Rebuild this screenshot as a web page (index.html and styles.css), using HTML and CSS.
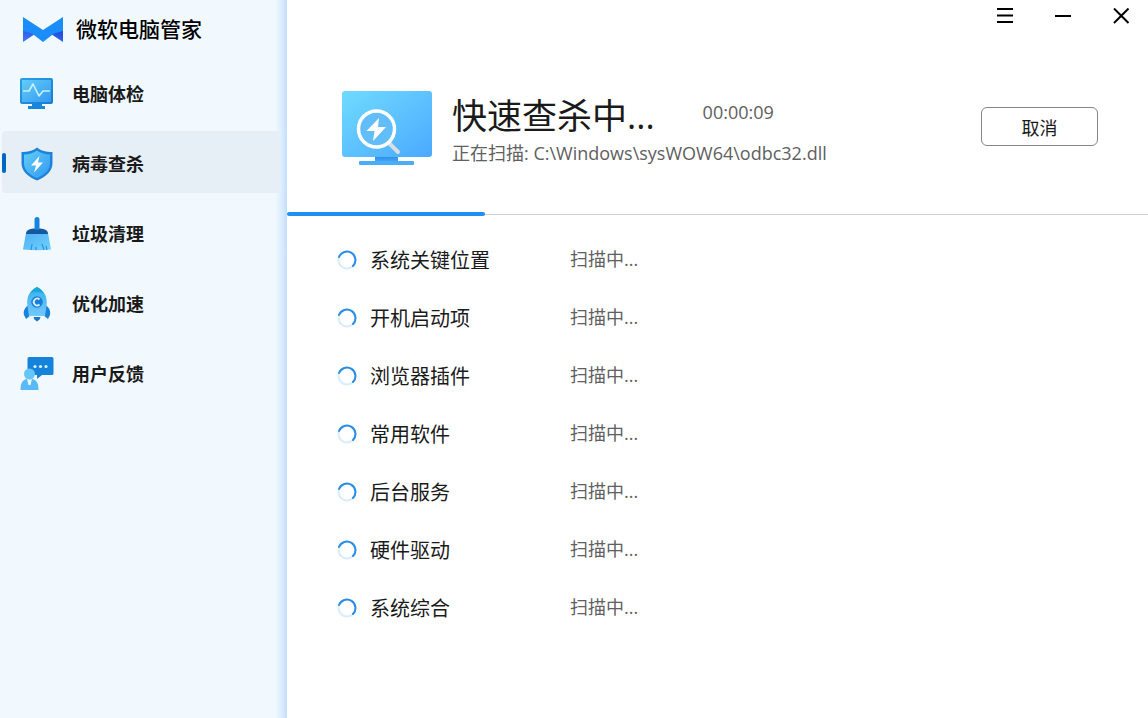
FILE: index.html
```html
<!DOCTYPE html>
<html lang="zh-CN">
<head>
<meta charset="utf-8">
<title>微软电脑管家</title>
<link rel="stylesheet" href="styles.css">
</head>
<body>
<svg class="symbols" aria-hidden="true">
  <symbol id="spinner" viewBox="0 0 20 20">
    <circle cx="10" cy="10" r="8.500" fill="none" stroke="#d9ecfd" stroke-width="2"/>
    <path d="M2 7a8.500 8.500 0 1 1 14 9" fill="none" stroke="#2a8ce6" stroke-width="2" stroke-linecap="round"/>
  </symbol>
</svg>
<div class="app">
  <aside class="sidebar">
    <div class="brand">
      <svg class="brand-logo" viewBox="0 0 40 26" aria-hidden="true">
        <defs><linearGradient id="fold" x1="0" y1="1" x2="1" y2="0"><stop offset="0" stop-color="#3f7bfa"/><stop offset="1" stop-color="#2347dc"/></linearGradient></defs>
        <path d="M0 14h12v3L0 25zM40 14H28v3l12 8z" fill="url(#fold)"/>
        <path d="M0 0l20 13L40 0v14l-9 2.500L20 25 9 16.500 0 14z" fill="#1b8dfb"/>
      </svg>
      <span class="brand-name">微软电脑管家</span>
    </div>
    <nav class="nav">
      <a class="nav-item" href="#checkup">
        <svg class="nav-icon" viewBox="0 0 36 36" aria-hidden="true">
          <defs>
            <linearGradient id="screen" x1="0" y1="0" x2="1" y2="1"><stop offset="0" stop-color="#63cdf8"/><stop offset="1" stop-color="#3299f1"/></linearGradient>
            <linearGradient id="frame" x1="0" y1="0" x2="1" y2="1"><stop offset="0" stop-color="#2ba1e5"/><stop offset="1" stop-color="#167bd6"/></linearGradient>
          </defs>
          <path d="M13 27h10v3h3v3H9v-3h4z" fill="#1688dc"/>
          <rect x="1" y="2" width="33" height="26" rx="2" fill="url(#frame)"/>
          <rect x="3" y="4" width="29" height="22" fill="url(#screen)"/>
          <path d="M4 15h6l4-7 6 12 4-5h7" fill="none" stroke="#c9f1ff" stroke-width="1.600" stroke-linejoin="round"/>
        </svg>
        <span>电脑体检</span>
      </a>
      <a class="nav-item active" href="#virus" aria-current="page">
        <svg class="nav-icon" viewBox="0 0 36 36" aria-hidden="true">
          <path d="M18 1.500c4.500 3.500 9 4.500 15.500 4.500v11c0 8-6 13.500-15.500 17.500C8.500 30.500 2.500 25 2.500 17V6C9 6 13.500 5 18 1.500z" fill="#1c84d8"/>
          <path d="M18 4.500c4 2.800 8 3.800 13 4v9c0 6.500-5 11-13 14.500C10 28.500 5 24 5 17.500v-9c5-.200 9-1.200 13-4z" fill="url(#screen)"/>
          <path d="M20.500 10l-8.500 9.500h5L15 26.500l9-10h-5z" fill="#fff"/>
        </svg>
        <span>病毒查杀</span>
      </a>
      <a class="nav-item" href="#cleanup">
        <svg class="nav-icon" viewBox="0 0 36 36" aria-hidden="true">
          <defs><linearGradient id="bristle" x1="0" y1="0" x2="1" y2="1"><stop offset="0" stop-color="#4fb0f2"/><stop offset="1" stop-color="#70d2ff"/></linearGradient></defs>
          <path d="M7 17L4 33.500q14 1.500 28 0L29 17z" fill="url(#bristle)"/>
          <path d="M12 34l1-6M17 34v-3M25 34l-2-6M28 34l-1-4" stroke="#2e91e0" stroke-width="1.200"/>
          <path d="M7 18c0-4 3-5 8-5.500h6c5 .500 8 1.500 8 5.500z" fill="#14589f"/>
          <rect x="15.500" y="1" width="5" height="13" rx="2.500" fill="#1785df"/>
        </svg>
        <span>垃圾清理</span>
      </a>
      <a class="nav-item" href="#boost">
        <svg class="nav-icon" viewBox="0 0 36 36" aria-hidden="true">
          <defs><linearGradient id="rocket" x1="0" y1="0" x2="0" y2="1"><stop offset="0" stop-color="#38b0ed"/><stop offset="1" stop-color="#73c8ff"/></linearGradient></defs>
          <path d="M10 19c-4 2-6 6-5 10l2 4 5-4zM26 19c4 2 6 6 5 10l-2 4-5-4z" fill="#1983db"/>
          <path d="M14.500 31h7l-1 2.500-2.500 2-2.500-2z" fill="#1678cf"/>
          <path d="M18 1c7 3 11 10 9.500 19L26 30H10L8.500 20C7 11 11 4 18 1z" fill="url(#rocket)"/>
          <path d="M18 1c3 1.300 5 3.500 6.500 6q-6.500-2-13 0C13 4.500 15 2.300 18 1z" fill="#19a8d7"/>
          <circle cx="18" cy="16" r="5.800" fill="#187fd8"/>
          <path d="M20.500 13.500a3.400 3.400 0 1 0 0 5" fill="none" stroke="#d5f1ff" stroke-width="1.800"/>
        </svg>
        <span>优化加速</span>
      </a>
      <a class="nav-item" href="#feedback">
        <svg class="nav-icon" viewBox="0 0 36 36" aria-hidden="true">
          <path d="M10 1h23q1.500 0 1.500 1.500v15q0 1.500-1.500 1.500H23l-5 4v-4h-8q-1.500 0-1.500-1.500v-15Q8.500 1 10 1z" fill="#1683db"/>
          <g fill="#d4f0ff"><circle cx="16" cy="10.500" r="1.600"/><circle cx="21.500" cy="10.500" r="1.600"/><circle cx="27" cy="10.500" r="1.600"/></g>
          <path d="M1.500 34c0-7 2-10 6-11h6c4 1 6 4 6 11z" fill="#59b9fa"/>
          <path d="M8 23h5l-1.500 6h-2z" fill="#e8f8ff"/>
          <circle cx="10.500" cy="18" r="5.500" fill="#65c5fb"/>
        </svg>
        <span>用户反馈</span>
      </a>
    </nav>
  </aside>

  <main class="main">
    <div class="titlebar">
      <button class="win-btn" type="button" aria-label="菜单"><svg viewBox="0 0 16 16"><path d="M0 1h16M0 7.500h16M0 14h16" /></svg></button>
      <button class="win-btn" type="button" aria-label="最小化"><svg viewBox="0 0 16 16"><path d="M0 8h16"/></svg></button>
      <button class="win-btn" type="button" aria-label="关闭"><svg viewBox="0 0 16 16"><path d="M1 .500l14.500 14.500M15.500 .500L1 15"/></svg></button>
    </div>
    <section class="hero">
      <svg class="hero-icon" viewBox="0 0 90 76" aria-hidden="true">
        <defs>
          <linearGradient id="monitor" x1="0" y1="0" x2="1" y2="1"><stop offset="0" stop-color="#70dbff"/><stop offset="1" stop-color="#4ba9ff"/></linearGradient>
          <linearGradient id="neck" x1="0" y1="0" x2="0" y2="1"><stop offset="0" stop-color="#2a8ce8"/><stop offset="1" stop-color="#45a8f8"/></linearGradient>
        </defs>
        <path d="M33 65h23v6H33z" fill="url(#neck)"/>
        <rect x="17" y="70" width="55" height="4" rx="1" fill="#49adf8"/>
        <rect x="0" y="0" width="90" height="66" rx="3" fill="url(#monitor)"/>
        <path d="M47 52l9 9" stroke="#d8dee5" stroke-width="4" stroke-linecap="round"/>
        <circle cx="34.500" cy="38" r="18" fill="#62bdfb" stroke="#fff" stroke-width="3.500"/>
        <path d="M37 27L24.500 40h8L31 50l13-14h-8z" fill="#fff"/>
      </svg>
      <div class="hero-text">
        <div class="hero-line">
          <h1 class="hero-title">快速查杀中...</h1>
          <time class="elapsed">00:00:09</time>
        </div>
        <p class="scanning">正在扫描: C:\Windows\sysWOW64\odbc32.dll</p>
      </div>
      <button class="cancel" type="button">取消</button>
    </section>
    <div class="progress" role="progressbar" aria-label="扫描进度" aria-valuenow="23" aria-valuemin="0" aria-valuemax="100">
      <div class="progress-fill" style="width:23%"></div>
    </div>
    <ul class="scan-list">
      <li class="scan-row"><svg class="spinner" aria-hidden="true"><use href="#spinner"/></svg><span class="scan-name">系统关键位置</span><span class="scan-state">扫描中...</span></li>
      <li class="scan-row"><svg class="spinner" aria-hidden="true"><use href="#spinner"/></svg><span class="scan-name">开机启动项</span><span class="scan-state">扫描中...</span></li>
      <li class="scan-row"><svg class="spinner" aria-hidden="true"><use href="#spinner"/></svg><span class="scan-name">浏览器插件</span><span class="scan-state">扫描中...</span></li>
      <li class="scan-row"><svg class="spinner" aria-hidden="true"><use href="#spinner"/></svg><span class="scan-name">常用软件</span><span class="scan-state">扫描中...</span></li>
      <li class="scan-row"><svg class="spinner" aria-hidden="true"><use href="#spinner"/></svg><span class="scan-name">后台服务</span><span class="scan-state">扫描中...</span></li>
      <li class="scan-row"><svg class="spinner" aria-hidden="true"><use href="#spinner"/></svg><span class="scan-name">硬件驱动</span><span class="scan-state">扫描中...</span></li>
      <li class="scan-row"><svg class="spinner" aria-hidden="true"><use href="#spinner"/></svg><span class="scan-name">系统综合</span><span class="scan-state">扫描中...</span></li>
    </ul>
  </main>
</div>
</body>
</html>
```
FILE: styles.css
```css
* { box-sizing: border-box; }

body {
  margin: 0;
  background: #fff;
  color: #1a1a1a;
  font-family: "Open Sans", "Noto Sans CJK SC", sans-serif;
  font-size: 18px;
}

button { font: inherit; color: inherit; padding: 0; cursor: pointer; }

.symbols { display: none; }

.app { display: flex; min-height: 100vh; }

.sidebar {
  flex: 0 0 287px;
  background: linear-gradient(to left, #c0dfff 0, #d6eaff 4px, #f1f9ff 12px);
}

.brand {
  display: flex;
  align-items: center;
  gap: 13px;
  height: 60px;
  padding-left: 23px;
}
.brand-logo { width: 40px; height: 26px; }
.brand-name { padding-bottom: 2px; font-size: 21px; line-height: 30px; font-weight: 500; color: #000; }

.nav {
  display: flex;
  flex-direction: column;
  gap: 8px;
  padding: 1px 6px 0 2px;
}
.nav-item {
  position: relative;
  display: flex;
  align-items: center;
  gap: 17px;
  height: 62px;
  padding: 3px 0 0 17px;
  border-radius: 4px;
  color: #1a1a1a;
  font-weight: 700;
  line-height: 26px;
  text-decoration: none;
}
.nav-item.active { background: #e6eef6; }
.nav-item.active::before {
  content: "";
  position: absolute;
  left: 0;
  top: 22px;
  width: 4px;
  height: 20px;
  border-radius: 2px;
  background: #0067c0;
}
.nav-icon { width: 36px; height: 36px; }

.main { flex: 1; min-width: 0; }

.titlebar {
  display: flex;
  justify-content: flex-end;
  gap: 12px;
  padding-right: 4px;
}
.win-btn {
  display: flex;
  align-items: center;
  justify-content: center;
  width: 46px;
  height: 31px;
  border: 0;
  background: none;
}
.win-btn svg { width: 16px; height: 16px; fill: none; stroke: #000; stroke-width: 2; }

.hero {
  display: flex;
  align-items: flex-start;
  padding: 60px 50px 0 55px;
  height: 181px;
}
.hero-icon { flex: none; width: 90px; height: 76px; }
.hero-text { flex: 1; min-width: 0; padding-left: 20px; }
.hero-line { display: flex; gap: 48px; }
.hero-title { margin: 0; font-size: 35px; font-weight: 400; line-height: 50px; }
.elapsed { color: #606060; line-height: 42px; }
.scanning { margin: 0; color: #606060; line-height: 24px; }
.cancel {
  flex: none;
  width: 117px;
  height: 39px;
  margin-top: 16px;
  border: 1px solid #858585;
  border-radius: 6px;
  background: #fff;
}

.progress {
  display: flex;
  align-items: center;
  height: 4px;
  background: linear-gradient(#d0d0d0, #d0d0d0) 0 2px / 100% 1px no-repeat;
}
.progress-fill { height: 4px; border-radius: 2px; background: #1e90f5; }

.scan-list { list-style: none; margin: 0; padding: 15px 0 0 50px; }
.scan-row {
  display: grid;
  grid-template-columns: 20px 187px 1fr;
  column-gap: 13px;
  align-items: center;
  height: 58px;
}
.spinner { width: 20px; height: 20px; }
.scan-name { padding-top: 2px; font-size: 20px; line-height: 28px; }
.scan-state { padding-bottom: 2px; color: #606060; line-height: 26px; }
```
